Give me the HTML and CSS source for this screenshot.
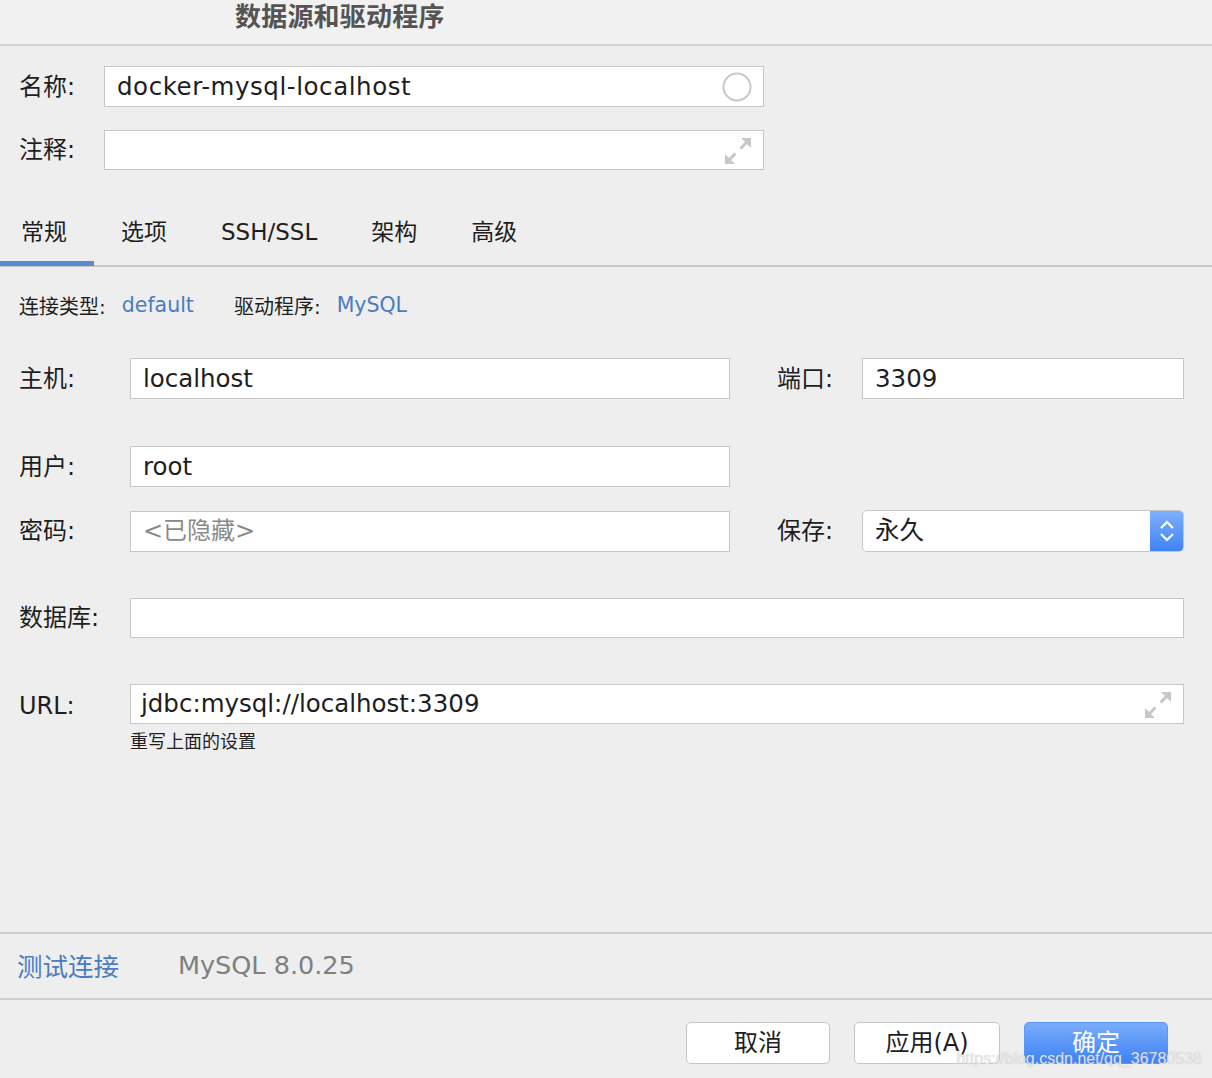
FILE: index.html
```html
<!DOCTYPE html>
<html lang="zh">
<head>
<meta charset="utf-8">
<title>数据源和驱动程序</title>
<link rel="stylesheet" href="styles.css">
</head>
<body>
<div class="dialog">
  <header class="titlebar"><h1 class="title">数据源和驱动程序</h1></header>

  <section class="meta">
    <div class="meta-row">
      <span class="label">名称:</span>
      <div class="field field-name">
        <span class="value value-name">docker-mysql-localhost</span>
        <svg class="circle" width="30" height="30" viewBox="0 0 30 30"><circle cx="15" cy="15" r="13.5" fill="none" stroke="#c6c8ca" stroke-width="2"/></svg>
      </div>
    </div>
    <div class="meta-row meta-row-2">
      <span class="label">注释:</span>
      <div class="field field-comment">
        <svg class="expand" width="26" height="26" viewBox="0 0 26 26"><polygon points="26,0 16,0 26,10" fill="#c4c8cc"/><line x1="22" y1="4" x2="15.5" y2="10.5" stroke="#c4c8cc" stroke-width="3"/><line x1="10.5" y1="15.5" x2="4" y2="22" stroke="#c4c8cc" stroke-width="3"/><polygon points="0,26 0,16 10,26" fill="#c4c8cc"/></svg>
      </div>
    </div>
  </section>

  <nav class="tabs">
    <span class="tab active">常规</span>
    <span class="tab">选项</span>
    <span class="tab">SSH/SSL</span>
    <span class="tab">架构</span>
    <span class="tab">高级</span>
  </nav>

  <main class="content">
    <div class="conn">
      <span class="conn-label">连接类型:</span><span class="link">default</span>
      <span class="conn-label driver">驱动程序:</span><span class="link">MySQL</span>
    </div>

    <div class="row row-host">
      <span class="label">主机:</span>
      <div class="field"><span class="value">localhost</span></div>
      <span class="label label-right">端口:</span>
      <div class="field field-right"><span class="value">3309</span></div>
    </div>

    <div class="row row-user">
      <span class="label">用户:</span>
      <div class="field"><span class="value">root</span></div>
    </div>

    <div class="row row-pass">
      <span class="label">密码:</span>
      <div class="field"><span class="value placeholder">&lt;已隐藏&gt;</span></div>
      <span class="label label-right">保存:</span>
      <div class="select field-right">
        <span class="value">永久</span>
        <span class="select-btn">
          <svg width="16" height="24" viewBox="0 0 16 24"><polyline points="2,9 8,3 14,9" fill="none" stroke="#fff" stroke-width="2.2"/><polyline points="2,15 8,21 14,15" fill="none" stroke="#fff" stroke-width="2.2"/></svg>
        </span>
      </div>
    </div>

    <div class="row row-db">
      <span class="label">数据库:</span>
      <div class="field field-wide field-db"></div>
    </div>

    <div class="row row-url">
      <span class="label label-url">URL:</span>
      <div class="field field-wide field-url">
        <span class="value">jdbc:mysql://localhost:3309</span>
        <svg class="expand" width="26" height="26" viewBox="0 0 26 26"><polygon points="26,0 16,0 26,10" fill="#c4c8cc"/><line x1="22" y1="4" x2="15.5" y2="10.5" stroke="#c4c8cc" stroke-width="3"/><line x1="10.5" y1="15.5" x2="4" y2="22" stroke="#c4c8cc" stroke-width="3"/><polygon points="0,26 0,16 10,26" fill="#c4c8cc"/></svg>
      </div>
    </div>
    <div class="hint">重写上面的设置</div>
  </main>

  <div class="testbar">
    <span class="test-link">测试连接</span>
    <span class="version">MySQL 8.0.25</span>
  </div>

  <footer class="buttons">
    <button class="btn btn-cancel">取消</button>
    <button class="btn btn-apply">应用(A)</button>
    <button class="btn btn-ok">确定</button>
    <span class="watermark">https://blog.csdn.net/qq_36780538</span>
  </footer>
</div>
</body>
</html>
```

FILE: styles.css
```css
* { box-sizing: border-box; }

html, body {
  margin: 0;
  padding: 0;
  background: #eeeeee;
}

body {
  font-family: "DejaVu Sans", "Noto Sans CJK SC", sans-serif;
  color: #222;
}

.dialog {
  position: relative;
  width: 1212px;
  height: 1078px;
  display: flex;
  flex-direction: column;
  overflow: hidden;
}

/* Title */
.titlebar {
  height: 46px;
  background: #f1f1f1;
  border-bottom: 2px solid #d4d4d4;
  padding-left: 235px;
  padding-top: 1px;
}
.title {
  margin: 0;
  font-family: "Noto Sans CJK SC", sans-serif;
  font-size: 26px;
  font-weight: 700;
  line-height: 28px;
  color: #545454;
  letter-spacing: 0.2px;
}

/* name / comment */
.meta {
  padding-left: 19px;
  margin-top: 20px;
}
.meta-row {
  display: flex;
  align-items: center;
}
.meta-row-2 { margin-top: 23px; }

.label {
  font-size: 24px;
  line-height: 30px;
  color: #1e1e1e;
}
.meta-row .label { width: 85px; }
.label-url { padding-top: 4px; }

.field {
  position: relative;
  height: 41px;
  background: #fff;
  border: 1px solid #c6c6c6;
  display: flex;
  align-items: center;
  padding-left: 12px;
}
.field-name { width: 660px; }
.field-comment { width: 660px; height: 40px; }

.value {
  font-size: 24.5px;
  line-height: 30px;
  color: #1e1e1e;
  white-space: nowrap;
}
.value-name { letter-spacing: 0.55px; }
.placeholder {
  color: #8a8a8a;
  font-size: 24px;
}

.circle {
  position: absolute;
  right: 11px;
  top: 5px;
}
.expand {
  position: absolute;
  right: 12px;
  top: 7px;
}

/* Tabs */
.tabs {
  margin-top: 29px;
  display: flex;
  border-bottom: 2px solid #c9c9c9;
  margin-left: -6px;
}
.tab {
  position: relative;
  padding: 0 27px;
  height: 66px;
  line-height: 66px;
  font-size: 23px;
  color: #1e1e1e;
}
.tab.active::after {
  content: "";
  position: absolute;
  left: 0;
  right: 0;
  bottom: -1px;
  height: 5px;
  background: #5a8bd2;
}

/* content */
.content {
  flex: 1;
  padding-left: 19px;
}

.conn {
  margin-top: 24px;
  display: flex;
  align-items: center;
  height: 28px;
}
.conn-label {
  font-size: 20px;
  color: #1e1e1e;
  margin-right: 16px;
}
.conn-label.driver { margin-left: 40px; }
.link {
  font-size: 20.5px;
  color: #4a7cc1;
}

.row {
  display: grid;
  grid-template-columns: 111px 600px 47px 85px 322px;
  align-items: center;
}
.row-host { margin-top: 39px; }
.row-user { margin-top: 47px; }
.row-pass { margin-top: 23px; }
.row-db { margin-top: 46px; }
.row-url { margin-top: 46px; }

.label-right { grid-column: 4; }
.field-right { grid-column: 5; }
.field-wide { grid-column: 2 / 6; }
.field-db { height: 40px; }
.field-url { height: 40px; padding-left: 10px; }

.select {
  position: relative;
  height: 42px;
  background: #fff;
  border: 1px solid #c6c6c6;
  border-radius: 5px;
  display: flex;
  align-items: center;
  padding-left: 12px;
  overflow: hidden;
}
.select-btn {
  position: absolute;
  right: 0;
  top: 0;
  bottom: 0;
  width: 33px;
  background: linear-gradient(#7db0fb, #3f83f6);
  display: flex;
  align-items: center;
  justify-content: center;
}

.hint {
  margin-top: 7px;
  margin-left: 111px;
  font-size: 18px;
  line-height: 22px;
  color: #1e1e1e;
}

/* test bar */
.testbar {
  height: 68px;
  border-top: 2px solid #cfcfcf;
  border-bottom: 2px solid #cfcfcf;
  display: flex;
  align-items: center;
  padding-left: 17px;
  padding-bottom: 3px;
}
.test-link {
  font-size: 25.5px;
  color: #4a7cc1;
  margin-right: 59px;
}
.version {
  font-size: 25.5px;
  color: #808080;
}

/* buttons */
.buttons {
  height: 78px;
  display: flex;
  justify-content: flex-end;
  align-items: flex-start;
  padding-top: 22px;
  padding-right: 44px;
  gap: 24px;
}
.btn {
  height: 42px;
  font-family: "DejaVu Sans", "Noto Sans CJK SC", sans-serif;
  font-size: 24px;
  color: #1e1e1e;
  background: #fff;
  border: 1px solid #c4c4c4;
  border-radius: 5px;
  padding: 0;
  line-height: 40px;
}
.btn-cancel { width: 144px; }
.btn-apply { width: 146px; }
.btn-ok {
  width: 144px;
  color: #fff;
  border-color: #5d96f4;
  background: linear-gradient(#79adfb, #3e82f6);
}

.watermark {
  position: absolute;
  right: 10px;
  bottom: 10px;
  font-family: "Liberation Sans", sans-serif;
  font-size: 16px;
  color: rgba(236, 236, 236, 0.9);
  text-shadow: 0 0 1px rgba(150, 150, 150, 0.6);
}
```
